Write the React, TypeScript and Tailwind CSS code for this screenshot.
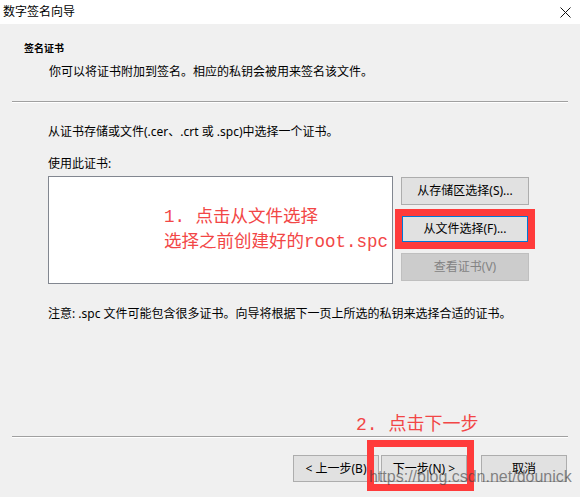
import type { ReactNode } from "react";

const ui = {
  fontFamily: '"Noto Sans", "Noto Sans CJK SC", sans-serif',
};
const note = {
  fontFamily: '"Liberation Mono", "Noto Sans CJK SC", monospace',
};

function Btn({
  children,
  className = "",
  state = "normal",
}: {
  children: ReactNode;
  className?: string;
  state?: "normal" | "focus" | "disabled";
}) {
  const look =
    state === "focus"
      ? "border-2 border-[#0078d7] bg-[#e1e1e1] text-black"
      : state === "disabled"
        ? "border border-[#bfbfbf] bg-[#cccccc] text-[#838383]"
        : "border border-[#adadad] bg-[#e1e1e1] text-black";
  return (
    <div
      className={`flex items-center justify-center text-[12px] leading-none ${look} ${className}`}
    >
      {children}
    </div>
  );
}

export default function App() {
  return (
    <div
      style={ui}
      className="relative flex h-[497px] w-[580px] flex-col overflow-hidden bg-[#f0f0f0] text-black"
    >
      {/* title bar */}
      <div className="flex h-[24px] items-center justify-between bg-white pl-[3px] pr-[9px]">
        <span className="text-[12px] leading-none">数字签名向导</span>
        <svg width="11" height="11" viewBox="0 0 11 11">
          <path d="M0.5 0.5 L10.5 10.5 M10.5 0.5 L0.5 10.5" stroke="#111" strokeWidth="1" />
        </svg>
      </div>

      {/* header */}
      <div className="pl-[24px] pt-[17px] text-[10px] font-bold leading-[14px]">签名证书</div>
      <div className="mt-[9px] pl-[49px] text-[12px] leading-[16px]">
        你可以将证书附加到签名。相应的私钥会被用来签名该文件。
      </div>
      <div className="mx-[12px] mt-[21px] border-t border-b border-t-[#a0a0a0] border-b-white" />

      {/* body */}
      <div className="pl-[48px]">
        <div className="mt-[21px] text-[12px] leading-[16px]">
          从证书存储或文件(.cer、.crt 或 .spc)中选择一个证书。
        </div>
        <div className="mt-[16px] text-[12px] leading-[16px]">使用此证书:</div>
        <div className="mt-[4px] flex gap-[8px]">
          <div className="h-[108px] w-[345px] overflow-visible border border-[#828790] bg-white">
            <div
              style={note}
              className="whitespace-nowrap pl-[115px] pt-[28px] text-[17.5px] leading-[25px] text-[#f24646]"
            >
              <div>1. 点击从文件选择</div>
              <div>选择之前创建好的root.spc</div>
            </div>
          </div>
          <div className="flex flex-col gap-[10px] pt-[1px]">
            <Btn className="h-[28px] w-[128px]">从存储区选择(S)...</Btn>
            <Btn className="h-[28px] w-[128px]" state="focus">
              从文件选择(F)...
            </Btn>
            <Btn className="h-[28px] w-[128px]" state="disabled">
              查看证书(V)
            </Btn>
          </div>
        </div>
        <div className="mt-[22px] text-[12px] leading-[16px]">
          注意: .spc 文件可能包含很多证书。向导将根据下一页上所选的私钥来选择合适的证书。
        </div>
      </div>

      <div className="flex-1" />

      {/* footer */}
      <div className="mx-[12px] border-t border-b border-t-[#a0a0a0] border-b-white" />
      <div className="mb-[15px] mt-[17px] flex justify-end pr-[13px]">
        <Btn className="h-[27px] w-[86px]">&lt; 上一步(B)</Btn>
        <Btn className="ml-[2px] h-[27px] w-[86px]">下一步(N) &gt;</Btn>
        <Btn className="ml-[14px] h-[27px] w-[86px]">取消</Btn>
      </div>

      {/* annotations drawn over the dialog */}
      <div className="absolute left-[395px] top-[209px] h-[40px] w-[140px] border-[7px] border-[#ff3b3b]" />
      <div
        style={note}
        className="absolute left-[356px] top-[413px] whitespace-nowrap text-[18px] leading-[25px] text-[#f24646]"
      >
        2. 点击下一步
      </div>
      <div className="absolute left-[367px] top-[440px] h-[51px] w-[107px] border-[7px] border-[#ff3b3b]" />
      <div
        style={{ fontFamily: '"Liberation Sans", Arial, sans-serif' }}
        className="absolute left-[369px] top-[467px] whitespace-nowrap text-[16px] leading-[20px] text-[#3c3c3c]/60"
      >
        https://blog.csdn.net/dounick
      </div>
    </div>
  );
}
